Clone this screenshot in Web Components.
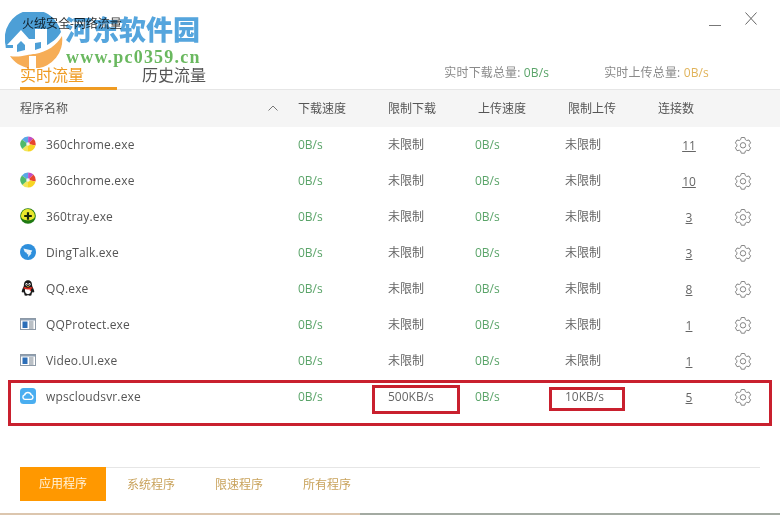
<!DOCTYPE html>
<html lang="zh">
<head>
<meta charset="utf-8">
<title>网络流量</title>
<style>
html, body { margin: 0; padding: 0; background: #fff; }
body { font: 12px "Open Sans", "Noto Sans CJK SC", sans-serif; color: #555; width: 780px; height: 515px; overflow: hidden; }
</style>
</head>
<body>
<traffic-window></traffic-window>

<script>
const CN = `"Open Sans", "Noto Sans CJK SC", sans-serif`

//#region ICONS
const icons = {
    chrome: `<svg viewBox="0 0 16 16" width="16" height="16">
        <path d="M8 8 L1.900 3.400 A7.600 7.600 0 0 1 8.200 .4Z" fill="#5aa7e6"/>
        <path d="M8 8 L8.200 .4 A7.600 7.600 0 0 1 13.400 2.600Z" fill="#c04fc4"/>
        <path d="M8 8 L13.400 2.600 A7.600 7.600 0 0 1 15.500 9.500Z" fill="#e8452f"/>
        <path d="M8 8 L15.500 9.500 A7.600 7.600 0 0 1 8 15.600Z" fill="#f7d523"/>
        <path d="M8 8 L8 15.600 A7.600 7.600 0 0 1 2.200 12.900Z" fill="#f0e65a"/>
        <path d="M8 8 L2.200 12.900 A7.600 7.600 0 0 1 1.900 3.400Z" fill="#4fb96a"/>
        <circle cx="8" cy="8" r="1.800" fill="#f4f4f4"/>
    </svg>`,
    tray: `<svg viewBox="0 0 16 16" width="16" height="16">
        <circle cx="8" cy="8" r="7.800" fill="#1f7a12"/>
        <path d="M1 8A7 7 0 0 1 11 1.700C13.500 3 14.800 5.500 14.800 8 14.800 10.500 12 12.300 8 12.300 4.500 12.300 1 11 1 8Z" fill="#e9e62c"/>
        <path d="M6.900 4.200h2.200v2.700h2.700v2.200H9.100v2.700H6.900V9.100H4.200V6.900h2.700z" fill="#17250c"/>
    </svg>`,
    ding: `<svg viewBox="0 0 16 16" width="16" height="16">
        <circle cx="8" cy="8" r="8" fill="#2e8fdc"/>
        <path d="M3.400 4.600 L12.300 6.600 L10.700 9.300 L11.600 9.400 L7.800 13.300 L8.400 10.600 L6.600 10.100 L7 8.900 L4.800 7.900 Z" fill="#e8f3fb"/>
    </svg>`,
    qq: `<svg viewBox="0 0 16 16" width="16" height="16">
        <path d="M8 .3C5 .3 3.900 2.700 3.900 5.400 3.900 6.400 2.300 8.600 1.800 11 1.500 12.600 2.400 12.900 3.300 11.700 3.600 13 4.300 13.700 4.800 14 3.800 14.500 4.200 15.700 6 15.700 7 15.700 7.700 15.400 8 15 8.300 15.400 9 15.700 10 15.700 11.800 15.700 12.200 14.500 11.200 14 11.700 13.700 12.400 13 12.700 11.700 13.600 12.900 14.500 12.600 14.200 11 13.700 8.600 12.100 6.400 12.100 5.400 12.100 2.700 11 .3 8 .3Z" fill="#1a1a1a"/>
        <path d="M5.200 7.600C6.900 8.500 9.100 8.500 10.800 7.600 11.200 9 11.300 11.800 10.200 13.300 9 14.400 7 14.400 5.800 13.300 4.700 11.800 4.800 9 5.200 7.600Z" fill="#fff"/>
        <path d="M3.800 6.800C6 8 10 8 12.200 6.800L12.700 8.300C11.700 8.800 11.100 9 10.900 9L11 11.200 9.700 10.400 9.600 9.300C7.500 9.700 5.300 9.400 3.400 8.400Z" fill="#d8261c"/>
        <ellipse cx="6.500" cy="4.300" rx="1" ry="1.400" fill="#fff"/>
        <ellipse cx="9.500" cy="4.300" rx="1" ry="1.400" fill="#fff"/>
        <circle cx="6.700" cy="4.500" r=".5" fill="#111"/>
        <circle cx="9.300" cy="4.500" r=".5" fill="#111"/>
        <path d="M6.500 5.900h3L8 6.900Z" fill="#f2b01e"/>
    </svg>`,
    app: `<svg viewBox="0 0 16 16" width="16" height="16">
        <rect x=".5" y="2.500" width="15" height="11" fill="#fff" stroke="#8d99a6"/>
        <rect x="1" y="3" width="14" height="1.500" fill="#8fa0b2"/>
        <rect x="2.500" y="5.500" width="5" height="6.500" fill="#2d6fb8"/>
        <path d="M9 6h4.500M9 8h4.500M9 10h4.500M9 12h4.500" stroke="#75808c" stroke-width="1"/>
    </svg>`,
    cloud: `<svg viewBox="0 0 16 16" width="16" height="16">
        <rect width="16" height="16" rx="3.500" fill="#4aaef0"/>
        <path d="M4.900 11.400A2.300 2.300 0 0 1 4.600 6.900 3.500 3.500 0 0 1 11.200 6.900 2.300 2.300 0 0 1 11.100 11.400Z" fill="none" stroke="#fff" stroke-width="1.400"/>
    </svg>`
}

const gearIcon = `<svg viewBox="0 0 18 18" width="18" height="18" fill="none" stroke="#868686" stroke-width="1" stroke-linejoin="round">
    <path d="M7.300 1.500h3.400l.7 2.200 1.300.8 2.300-.5 1.600 2.900-1.500 1.700v1.500l1.500 1.700-1.600 2.900-2.300-.5-1.300.8-.7 2.200H7.300l-.7-2.200-1.300-.8-2.300.5-1.600-2.900 1.500-1.700V8.600L1.400 6.900 3 4l2.300.5 1.300-.8z"/>
    <circle cx="9" cy="9.300" r="2.700"/>
</svg>`
//#endregion ICONS

//#region WATERMARK
class SiteWatermark extends HTMLElement
{
    constructor(){
        super();
        this.attachShadow({mode: "open"}).innerHTML = /*html*/`
        <style>
        :host { position: absolute; left: 5px; top: 12px; width: 200px; height: 56px; pointer-events: none; mix-blend-mode: multiply; }
        svg { position: absolute; left: 0; top: 0; }
        .name { position: absolute; left: 60px; top: 2px; font: 900 27px/30px "Noto Sans CJK SC", serif; color: #55a5dd; white-space: nowrap; }
        .url { position: absolute; left: 61px; top: 37px; font: bold 18px/16px "Liberation Serif", serif; color: #6ab85f; white-space: nowrap; letter-spacing: 1.2px; }
        </style>
        <svg width="58" height="56" viewBox="0 0 58 56">
            <path d="M.5 33A28.500 28.500 0 0 1 56 20C52 27 46 31 42 33L42 17 30 17 30 27 24 27 16 18 2 33 8 33 8 36 .8 36Z" fill="#4d9fd6"/>
            <path d="M12 33L16 29 20 33 20 38 12 40ZM30 31L36 30 36 36 30 38Z" fill="#4d9fd6"/>
            <path d="M57 24A28.500 28.500 0 0 1 31 56.400L31 44 24 44 24 56C16 55 9 50 5 44 14 46 24 42 30 42 42 40 52 33 57 24Z" fill="#f6ad56"/>
        </svg>
        <div class="name">河东软件园</div>
        <div class="url">www.pc0359.cn</div>
        `
    }
}
customElements.define('site-watermark', SiteWatermark);
//#endregion WATERMARK

//#region HEADER
class TrafficHeader extends HTMLElement
{
    constructor(){
        super();
        this.attachShadow({mode: "open"}).innerHTML = /*html*/`
        <style>
        :host { display: block; height: 90px; box-sizing: border-box; border-bottom: 1px solid #e6e6e6; }
        .top { display: flex; height: 48px; }
        .title { margin: 15px 0 0 22px; font-size: 12px; line-height: 18px; color: #333; flex: 1; }
        .min { width: 12px; height: 1px; margin: 25px 24px 0 0; background: #777; }
        .close { margin: 12px 23px 0 0; height: 13px; }
        .bottom { display: flex; height: 41px; }
        .tabs { display: flex; margin-left: 20px; flex: 1; }
        .tab { font-size: 16px; line-height: 18px; padding-top: 18px; color: #555; box-sizing: border-box; height: 42px; }
        .tab.on { color: #ef9b22; width: 97px; border-bottom: 3px solid #ef9b22; }
        .tab + .tab { margin-left: 25px; }
        .stats { display: flex; gap: 55px; margin-right: 71px; padding-top: 16px; line-height: 18px; font-size: 12px; color: #8a8a8a; letter-spacing: .15px; }
        .down { color: #5aa469; }
        .up { color: #e0b35a; }
        </style>
        <div class="top">
            <div class="title">火绒安全-网络流量</div>
            <div class="min"></div>
            <svg class="close" width="12" height="13" viewBox="0 0 12 13"><path d="M.5 .5l11 12M11.500 .5l-11 12" stroke="#666" fill="none"/></svg>
        </div>
        <div class="bottom">
            <div class="tabs">
                <div class="tab on">实时流量</div>
                <div class="tab">历史流量</div>
            </div>
            <div class="stats">
                <div>实时下载总量: <span class="down">0B/s</span></div>
                <div>实时上传总量: <span class="up">0B/s</span></div>
            </div>
        </div>
        `
    }
}
customElements.define('traffic-header', TrafficHeader);
//#endregion HEADER

//#region TABLE
class TableHead extends HTMLElement
{
    constructor(){
        super();
        this.attachShadow({mode: "open"}).innerHTML = /*html*/`
        <style>
        :host { display: grid; grid-template-columns: 298px 90px 90px 90px 90px 1fr; height: 37px; box-sizing: border-box; padding-bottom: 2px; align-items: center; background: #f5f5f5; color: #555; font-size: 12px; }
        .name { padding-left: 20px; display: flex; justify-content: space-between; align-items: center; padding-right: 20px; }
        </style>
        <div class="name">程序名称
            <svg width="10" height="6" viewBox="0 0 10 6"><path d="M.5 5.500L5 1l4.500 4.500" stroke="#777" fill="none"/></svg>
        </div>
        <div>下载速度</div>
        <div>限制下载</div>
        <div>上传速度</div>
        <div>限制上传</div>
        <div>连接数</div>
        `
    }
}
customElements.define('table-head', TableHead);

class ProcRow extends HTMLElement
{
    constructor(){
        super();
        const icon = icons[this.getAttribute("icon")];
        this.attachShadow({mode: "open"}).innerHTML = /*html*/`
        <style>
        :host { display: grid; grid-template-columns: 298px 90px 87px 90px 100px 48px 1fr; height: 36px; align-items: center; font-size: 12px; color: #666; }
        .name { display: flex; align-items: center; gap: 10px; padding-left: 20px; color: #555; letter-spacing: .15px; }
        svg { display: block; }
        .name, .speed, .limit { padding-bottom: 2px; }
        .speed { color: #5aa469; }
        .count { text-align: center; text-decoration: underline; color: #666; }
        .gear { padding-left: 21px; }
        </style>
        <div class="name">${icon}<span>${this.getAttribute("name")}</span></div>
        <div class="speed">0B/s</div>
        <div class="limit"><slot name="down">未限制</slot></div>
        <div class="speed">0B/s</div>
        <div class="limit"><slot name="up">未限制</slot></div>
        <div class="count">${this.getAttribute("conns")}</div>
        <div class="gear">${gearIcon}</div>
        `
    }
}
customElements.define('proc-row', ProcRow);

class HighlightBox extends HTMLElement
{
    constructor(){
        super();
        this.attachShadow({mode: "open"}).innerHTML = /*html*/`
        <style>
        :host { position: absolute; box-sizing: border-box; border: 3px solid #c9202e; pointer-events: none; }
        </style>
        `
    }
}
customElements.define('highlight-box', HighlightBox);
//#endregion TABLE

//#region FOOTER
class FilterTabs extends HTMLElement
{
    constructor(){
        super();
        this.attachShadow({mode: "open"}).innerHTML = /*html*/`
        <style>
        :host { display: flex; margin: 0 20px; border-top: 1px solid #e6e6e6; height: 33px; font-size: 12px; color: #c9a35c; }
        div { display: flex; align-items: center; justify-content: center; width: 88px; padding-bottom: 2px; box-sizing: border-box; }
        .on { width: 86px; margin: -1px 1px 0 0; background: #ff9800; color: #fff3dc; }
        </style>
        <div class="on">应用程序</div>
        <div>系统程序</div>
        <div>限速程序</div>
        <div>所有程序</div>
        `
    }
}
customElements.define('filter-tabs', FilterTabs);
//#endregion FOOTER

class TrafficWindow extends HTMLElement
{
    constructor(){
        super();
        const rows = [
            ["chrome", "360chrome.exe", 11],
            ["chrome", "360chrome.exe", 10],
            ["tray", "360tray.exe", 3],
            ["ding", "DingTalk.exe", 3],
            ["qq", "QQ.exe", 8],
            ["app", "QQProtect.exe", 1],
            ["app", "Video.UI.exe", 1]
        ].map(r => `<proc-row icon="${r[0]}" name="${r[1]}" conns="${r[2]}"></proc-row>`).join("");

        this.attachShadow({mode: "open"}).innerHTML = /*html*/`
        <style>
        :host { display: block; position: relative; width: 780px; height: 515px; overflow: hidden; background: #fff; font-family: ${CN}; }
        .spacer { height: 52px; }
        .edge { position: absolute; left: 0; right: 0; bottom: 0; height: 2px; background: linear-gradient(to right, #dcc6ae 0, #dcc6ae 360px, #a3aaa2 360px); }
        </style>
        <traffic-header></traffic-header>
        <table-head></table-head>
        ${rows}
        <proc-row icon="cloud" name="wpscloudsvr.exe" conns="5">
            <span slot="down">500KB/s</span>
            <span slot="up">10KB/s</span>
        </proc-row>
        <div class="spacer"></div>
        <filter-tabs></filter-tabs>
        <div class="edge"></div>
        <highlight-box style="left:8px;top:380px;width:764px;height:46px"></highlight-box>
        <highlight-box style="left:372px;top:385px;width:88px;height:29px"></highlight-box>
        <highlight-box style="left:549px;top:387px;width:76px;height:24px"></highlight-box>
        <site-watermark></site-watermark>
        `
    }
}
customElements.define('traffic-window', TrafficWindow);
</script>
</body>
</html>
